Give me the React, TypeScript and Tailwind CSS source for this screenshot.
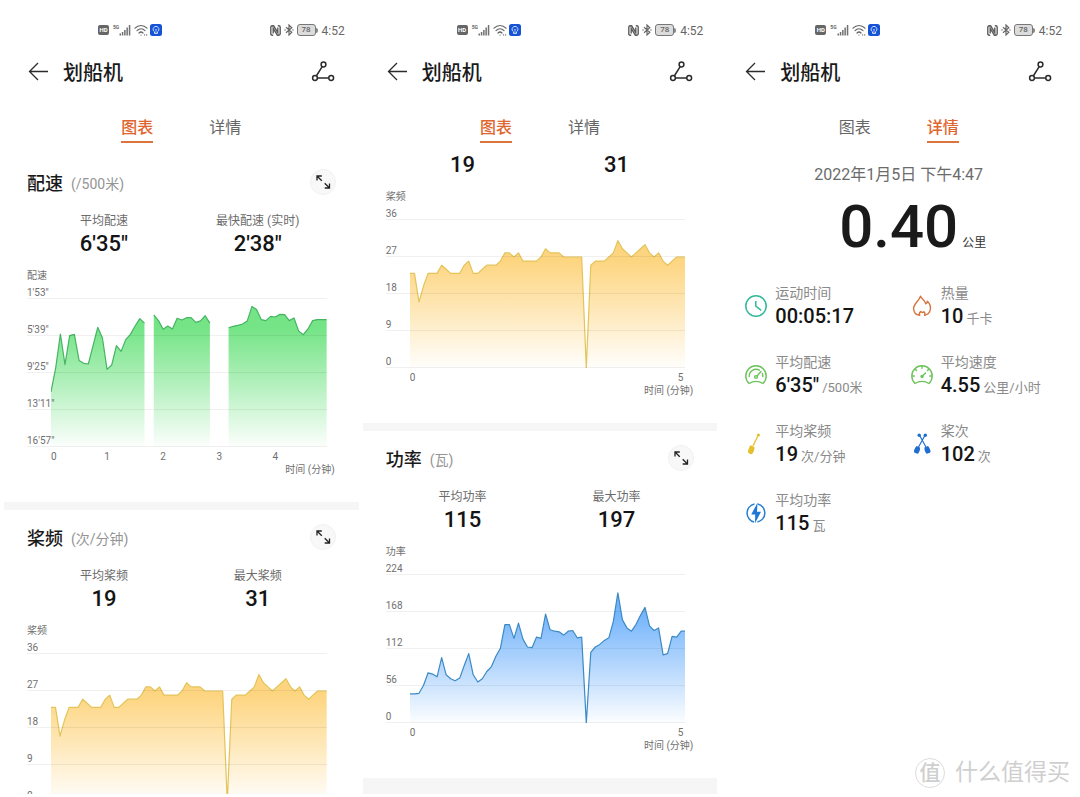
import { useId, type ReactNode } from 'react';

type Point = number | null;

type Series = {
  name: string;
  points: Point[];
  top: number;
  bottom: number;
  labels: string[];
  ticks: string[];
  stroke: string;
  fill: string;
};

// Seconds per 500 m, one sample every 5 seconds. null = rest, no pace recorded.
const paceSeries: Series = {
  name: '配速',
  points: [
    681, 534, 327, 514, 337, 329, 488, 506, 510, 398, 286, 351, 543, 516, 398, 433, 361, 329, 278, 233, 260,
    null,
    211, 245, 298, 278, 296, 231, 241, 227, 227, 256, 247, 215, 260,
    null, null, null,
    288, 280, 274, 266, 247, 158, 178, 239, 245, 219, 223, 207, 209, 245, 229, 308, 331, 296, 245, 239, 239, 239,
  ],
  top: 113,
  bottom: 1017,
  labels: ['1\'53"', '5\'39"', '9\'25"', '13\'11"', '16\'57"'],
  ticks: ['0', '1', '2', '3', '4'],
  stroke: '#45b463',
  fill: '#74e486',
};

const rateSeries: Series = {
  name: '桨频',
  points: [
    23, 23, 16, 20, 23, 23, 23, 25, 24, 23, 23, 23, 25, 26, 23, 23, 24, 25, 25, 25, 26, 28, 28, 27, 28, 26, 26, 26,
    26, 27, 29, 28, 28, 28, 27, 27, 27, 27, 27, 0, 25, 26, 26, 26, 27, 28, 31, 29, 28, 27, 28, 29, 30, 28, 27, 28,
    26, 25, 26, 27, 27, 27,
  ],
  top: 36,
  bottom: 0,
  labels: ['36', '27', '18', '9', '0'],
  ticks: ['0', '5'],
  stroke: '#e3c459',
  fill: '#fdd580',
};

const powerSeries: Series = {
  name: '功率',
  points: [
    44, 44, 45, 57, 76, 74, 70, 99, 73, 67, 64, 68, 87, 105, 73, 62, 67, 78, 85, 101, 113, 149, 149, 128, 151, 127,
    115, 114, 130, 128, 165, 141, 139, 138, 133, 139, 140, 129, 130, 0, 107, 115, 119, 125, 129, 154, 197, 156, 144,
    139, 149, 163, 175, 147, 140, 144, 103, 105, 131, 130, 139, 139,
  ],
  top: 224,
  bottom: 0,
  labels: ['224', '168', '112', '56', '0'],
  ticks: ['0', '5'],
  stroke: '#3c8ac4',
  fill: '#74b4fb',
};

const W = 276;
const H = 148;

function toSegments({ points, top, bottom }: Series) {
  const segments: string[][] = [[]];
  points.forEach((p, i) => {
    if (p === null) {
      if (segments[segments.length - 1].length) segments.push([]);
      return;
    }
    const x = (i / (points.length - 1)) * W;
    const y = ((p - top) / (bottom - top)) * H;
    segments[segments.length - 1].push(`${x.toFixed(1)},${y.toFixed(1)}`);
  });
  return segments;
}

function AreaChart({ series }: { series: Series }) {
  const id = useId();
  const segments = toSegments(series);
  const area = segments
    .map((s) => `M${s[0].split(',')[0]},${H} L${s.join(' L')} L${s[s.length - 1].split(',')[0]},${H} Z`)
    .join(' ');
  const line = segments.map((s) => `M${s.join(' L')}`).join(' ');
  const everyMinute = series.ticks.length > 2;

  return (
    <div className="text-[10px] leading-3 text-[#707070]">
      <div className="mt-[9px] leading-4">{series.name}</div>
      <div className="relative mr-2">
        <div className="absolute inset-x-0 bottom-0 h-[148px] pl-6">
          <svg viewBox={`0 0 ${W} ${H}`} preserveAspectRatio="none" className="block h-full w-full">
            <defs>
              <linearGradient id={id} x1="0" y1="0" x2="0" y2="1">
                <stop offset="0.15" stopColor={series.fill} />
                <stop offset="0.55" stopColor={series.fill} stopOpacity="0.55" />
                <stop offset="1" stopColor={series.fill} stopOpacity="0.02" />
              </linearGradient>
            </defs>
            <path d={area} fill={`url(#${id})`} />
            <path d={line} fill="none" stroke={series.stroke} strokeWidth="1.2" strokeLinejoin="round" />
          </svg>
        </div>
        <div className="relative leading-[10px]">
          {series.labels.map((label, i) => (
            <div
              key={label}
              className={`flex items-end border-b border-black/6 ${i === 0 ? 'h-[15px]' : 'h-[37px]'}`}
            >
              {label}
            </div>
          ))}
        </div>
      </div>
      <div className={`mt-1 mr-2 flex pl-6 ${everyMinute ? '' : 'justify-between pr-0.5'}`}>
        {series.ticks.map((tick, i) => (
          <span
            key={tick}
            className={i === 0 ? 'text-left' : 'text-center'}
            style={everyMinute ? { width: `${(12 / 59) * (i === 0 ? 50 : 100)}%` } : undefined}
          >
            {tick}
          </span>
        ))}
      </div>
      <div className="text-right leading-[14px]">时间 (分钟)</div>
    </div>
  );
}

function ExpandIcon() {
  return (
    <svg viewBox="0 0 24 24" className="h-6 w-6" fill="none" stroke="#222" strokeWidth="1.3">
      <path d="M6 10.500V6h4.800M6.200 6.200l4.600 4.600M18.500 13.500V18h-4.800M18.300 17.800l-4.600-4.600" />
    </svg>
  );
}

type ChartSectionProps = {
  title?: string;
  unit?: string;
  stats: { label?: string; value: string }[];
  series: Series;
};

function ChartSection({ title, unit, stats, series }: ChartSectionProps) {
  return (
    <section className="pr-6 pb-[25px] pl-[23px]">
      {title && (
        <div className="mb-[19px] flex items-center justify-between pt-[15px]">
          <h2 className="flex h-6 items-center gap-2 pt-1 text-lg leading-6 font-medium text-[#1a1a1a]">
            {title}
            <span className="text-sm font-normal text-[#949494]">({unit})</span>
          </h2>
          <button type="button" aria-label="全屏" className="rounded-full bg-[#f8f8f8] outline outline-[#f0f0f0]">
            <ExpandIcon />
          </button>
        </div>
      )}
      <div className="grid grid-cols-2 text-center">
        {stats.map(({ label, value }) => (
          <div key={value}>
            {label && <div className="text-xs leading-4 text-[#6b6b6b]">{label}</div>}
            <div className="text-[22px] leading-[30px] font-medium text-[#141414]">{value}</div>
          </div>
        ))}
      </div>
      <AreaChart series={series} />
    </section>
  );
}

function StatusBar() {
  return (
    <div className="flex h-5 items-center justify-between pr-[14px] pl-[94px] text-[#666]">
      <div className="flex items-center">
        <span className="flex h-[10px] w-[11px] items-center justify-center rounded-[2px] bg-[#666] text-[6px] leading-none font-bold text-white">
          HD
        </span>
        <span className="ml-1 self-start text-[5px] leading-[6px] font-bold">5G</span>
        <svg viewBox="0 0 12 12" className="h-3 w-3" fill="#707070">
          <path d="M.5 9.500h1.500V11.500H.5zM2.800 8h1.500v3.500H2.800zM5.100 6h1.500v5.500H5.100zM7.400 3.500h1.500v8H7.400zM9.800 1h1.500v10.500H9.800z" />
        </svg>
        <svg viewBox="0 0 14 12" className="ml-[3px] h-3 w-3.5" fill="none" stroke="#666" strokeWidth="1.200" strokeLinecap="round">
          <path d="M1 4.200C4.500.6 9.500.6 13 4.200M3 6.600c2.300-2.300 5.700-2.300 8 0M5 9c1.200-1.200 2.800-1.200 4 0" />
          <path d="M7 11v.1M10.500 10.900h.1M12.600 10.900h.1" />
        </svg>
        <svg viewBox="0 0 12 12" className="ml-0.5 h-3 w-3" fill="none">
          <rect width="12" height="12" rx="2.500" fill="#1652d6" />
          <path d="M4.500 7.800a2.900 2.900 0 1 1 3 0v1.600h-3z" stroke="#cfe0ff" strokeWidth="1" />
          <path d="M4.800 5l1.200 1.100L7.200 5M6 6v3" stroke="#cfe0ff" strokeWidth=".7" />
        </svg>
      </div>
      <div className="flex items-center">
        <svg viewBox="0 0 11 11" className="h-[11px] w-[11px]" fill="none" stroke="#5c5c5c">
          <path d="M3.200 10.200h-1Q.8 10.200.8 8.800V2.200Q.8.800 2.200.8h1.400l4.200 6.700V2.500M7.800.8h1q1.400 0 1.400 1.400v6.600q0 1.400-1.400 1.400H7.400L3.200 3.500v5" strokeWidth="1.400" />
        </svg>
        <svg viewBox="0 0 10 12" className="ml-[3px] h-3 w-[10px]" fill="none" stroke="#666" strokeWidth="1.200">
          <path d="M2 3.300l5.800 5L5 11V1l2.800 2.700L2 8.700M.3 6h1.500M8.200 6h1.500" />
        </svg>
        <span className="ml-[3px] flex h-3 w-[19px] items-center justify-center rounded-[3px] border border-[#777] bg-[#dcdcdc] text-[8px] leading-none font-medium">
          78
        </span>
        <span className="h-[5px] w-0.5 rounded-r-sm bg-[#888]" />
        <time className="ml-1 pt-px text-[12px] leading-4">4:52</time>
      </div>
    </div>
  );
}

function Screen({ active, children }: { active: '图表' | '详情'; children: ReactNode }) {
  return (
    <article className="flex min-h-0 flex-col overflow-hidden bg-white">
      <header className="pt-5">
        <StatusBar />
        <div className="flex h-16 items-center px-6">
          <button type="button" aria-label="返回">
            <svg viewBox="0 0 20 20" className="h-5 w-5" fill="none" stroke="#2b2b2b" strokeWidth="1.300">
              <path d="M20 9.500H1.500M10 1L1.500 9.500 10 18" />
            </svg>
          </button>
          <h1 className="ml-[15px] flex-1 pt-0.5 text-xl leading-7 font-medium text-[#1a1a1a]">划船机</h1>
          <button type="button" aria-label="轨迹">
            <svg viewBox="0 0 24 22" className="h-[22px] w-6" fill="none" stroke="#2b2b2b" strokeWidth="1.500">
              <circle cx="12.500" cy="3.500" r="2.400" />
              <circle cx="4" cy="17" r="2.400" />
              <circle cx="20.200" cy="17" r="2.400" />
              <path d="M11.200 5.600L5.300 15M6.400 17h11.400" />
            </svg>
          </button>
        </div>
        <div role="tablist" className="flex justify-center gap-14 pt-3 text-base leading-6">
          {['图表', '详情'].map((tab) => (
            <button
              key={tab}
              type="button"
              role="tab"
              aria-selected={tab === active}
              className={
                tab === active
                  ? 'border-b-2 border-[#dc7440] pb-px font-medium text-[#e0662f]'
                  : 'border-b-2 border-transparent pb-px text-[#666]'
              }
            >
              {tab}
            </button>
          ))}
        </div>
      </header>
      {children}
    </article>
  );
}

/* Detail icons */

function ClockIcon() {
  return (
    <svg viewBox="0 0 22 22" className="h-[22px] w-[22px]" fill="none" stroke="#35b999" strokeWidth="1.500">
      <circle cx="11" cy="11" r="10.200" />
      <path d="M10.800 6v5.200l5.400 4.200" />
    </svg>
  );
}

function FlameIcon() {
  return (
    <svg viewBox="0 0 22 22" className="h-[22px] w-[22px]" fill="none" stroke="#d6743f" strokeWidth="1.400" strokeLinejoin="round">
      <path d="M9.500 1.200c1.200 3 4.800 4.200 5.300 7.600 .9-.5 1.500-1.300 1.500-2.600 2.400 2.200 3.400 4.800 3.100 7.800-.4 3.300-2.600 5.600-5.900 6.200 .7-1.300 .5-2.600-.6-3.500-.9 .8-2.300 .8-3.200-.1-1.300 1-1.700 2.300-1 3.700-3.600-.4-6.100-3-6.100-6.700C2.600 9 7.600 6.500 9.500 1.200z" />
    </svg>
  );
}

function PaceIcon() {
  return (
    <svg viewBox="0 0 22 22" className="h-[22px] w-[22px]" fill="none" stroke="#6cc35c" strokeWidth="1.400" strokeLinecap="round">
      <path d="M4 19.500C2 17.600.8 14.900.8 12a10.200 10.200 0 0 1 20.400 0c0 2.900-1.200 5.600-3.200 7.500-4.400-2.700-9.600-2.700-14 0z" strokeLinejoin="round" />
      <path d="M4.200 12.500a6.900 6.900 0 0 1 10.200-6.300M17.300 9.400c.4 1 .6 2 .5 3.100" />
      <circle cx="11" cy="13" r="1.400" />
      <path d="M12 12l4-4.500" />
    </svg>
  );
}

function SpeedIcon() {
  return (
    <svg viewBox="0 0 22 22" className="h-[22px] w-[22px]" fill="none" stroke="#6cc35c" strokeWidth="1.400" strokeLinecap="round">
      <path d="M4 19.500C2 17.600.8 14.900.8 12a10.200 10.200 0 0 1 20.400 0c0 2.900-1.200 5.600-3.200 7.500-4.400-2.700-9.600-2.700-14 0z" strokeLinejoin="round" />
      <path d="M11 2.500v1.800M4.500 5.500l1 1M17.500 5.500l-1 1M1.500 12h1.800M20.500 12h-1.800" />
      <circle cx="11" cy="12.500" r="1" fill="#6cc35c" />
      <path d="M11 12.500l3.500-3.500" />
    </svg>
  );
}

function OarIcon() {
  return (
    <svg viewBox="0 0 22 22" className="h-[22px] w-[22px]" fill="#e6bf2e">
      <path d="M13.200 2.200L8 13" stroke="#e6bf2e" strokeWidth="1.300" />
      <circle cx="13.400" cy="2" r="1.600" />
      <path d="M5.500 12.200l3.900 1.800c.3 2.300-.5 4.400-1.900 6.500-.5 .7-1.300 .8-2.100 .4l-1.500-.7c-.8-.4-1.100-1.100-.9-1.900.6-2.500 1.200-4.500 2.500-6.100z" />
    </svg>
  );
}

function OarsIcon() {
  return (
    <svg viewBox="0 0 22 22" className="h-[22px] w-[22px]" fill="#1f6fd0">
      <path d="M14 2.200L7 15M8.500 2.200l7 12.800" stroke="#1f6fd0" strokeWidth="1.200" />
      <circle cx="14.300" cy="2.200" r="1.700" />
      <circle cx="8.200" cy="2.200" r="1.700" />
      <path d="M5.600 13l3.400 1.600c.2 2-.3 3.800-1.600 5.600-.4 .6-1 .7-1.700 .4l-2-.9c-.7-.3-.9-.9-.7-1.600.5-2.100 1.200-3.900 2.600-5.100zM16.900 13l-3.400 1.600c-.2 2 .3 3.800 1.600 5.600 .4 .6 1 .7 1.700 .4l2-.9c.7-.3 .9-.9 .7-1.600-.5-2.100-1.200-3.900-2.600-5.100z" />
    </svg>
  );
}

function PowerIcon() {
  return (
    <svg viewBox="0 0 22 22" className="h-[22px] w-[22px]" fill="none">
      <path d="M9.500 2A9.200 9.200 0 0 0 9.200 20M12.700 2A9.200 9.200 0 0 1 12.400 20" stroke="#2a80d2" strokeWidth="1.500" />
      <path d="M12.500.8L6.200 12.600h4l-.2 8.600 6-11.400h-4z" fill="#1f78d6" />
    </svg>
  );
}

const details = [
  { icon: <ClockIcon />, label: '运动时间', value: '00:05:17', unit: '' },
  { icon: <FlameIcon />, label: '热量', value: '10', unit: '千卡' },
  { icon: <PaceIcon />, label: '平均配速', value: '6\'35"', unit: '/500米' },
  { icon: <SpeedIcon />, label: '平均速度', value: '4.55', unit: '公里/小时' },
  { icon: <OarIcon />, label: '平均桨频', value: '19', unit: '次/分钟' },
  { icon: <OarsIcon />, label: '桨次', value: '102', unit: '次' },
  { icon: <PowerIcon />, label: '平均功率', value: '115', unit: '瓦' },
];

export default function App() {
  return (
    <main className="relative grid h-screen grid-cols-3 grid-rows-[minmax(0,1fr)] gap-1 overflow-hidden bg-white px-1 pb-[3px] font-['Roboto','Noto_Sans_CJK_SC',sans-serif]">
      {/* Charts, top of the page */}
      <Screen active="图表">
        <div className="pt-3">
          <ChartSection
            title="配速"
            unit="/500米"
            stats={[
              { label: '平均配速', value: '6\'35"' },
              { label: '最快配速 (实时)', value: '2\'38"' },
            ]}
            series={paceSeries}
          />
          <div className="h-2 bg-[#f6f6f6]" />
          <ChartSection
            title="桨频"
            unit="次/分钟"
            stats={[
              { label: '平均桨频', value: '19' },
              { label: '最大桨频', value: '31' },
            ]}
            series={rateSeries}
          />
        </div>
      </Screen>

      {/* Charts, scrolled down */}
      <Screen active="图表">
        <div className="flex flex-1 flex-col pt-[7px]">
          <ChartSection stats={[{ value: '19' }, { value: '31' }]} series={rateSeries} />
          <div className="h-2 bg-[#f6f6f6]" />
          <ChartSection
            title="功率"
            unit="瓦"
            stats={[
              { label: '平均功率', value: '115' },
              { label: '最大功率', value: '197' },
            ]}
            series={powerSeries}
          />
          <div className="flex-1 bg-[#f6f6f6]" />
        </div>
      </Screen>

      {/* Details */}
      <Screen active="详情">
        <div className="pt-5">
          <p className="text-center text-base leading-6 text-[#6b6b6b]">2022年1月5日 下午4:47</p>
          <div className="mt-2 grid h-16 grid-cols-[1fr_auto_1fr] items-baseline gap-1">
            <span />
            <strong className="text-[60px] leading-[64px] font-medium text-[#1a1a1a]">0.40</strong>
            <span className="text-xs leading-4 text-[#333]">公里</span>
          </div>
          <dl className="mt-6 grid grid-cols-2 gap-y-[23px] pl-6">
            {details.map(({ icon, label, value, unit }) => (
              <div key={label} className="flex items-center gap-2">
                {icon}
                <div>
                  <dt className="text-sm leading-5 text-[#8a8a8a]">{label}</dt>
                  <dd className="flex h-[26px] items-baseline gap-[3px] text-xl leading-[26px] font-medium text-[#141414]">
                    {value}
                    {unit && <span className="text-[13px] leading-4 font-normal text-[#8a8a8a]">{unit}</span>}
                  </dd>
                </div>
              </div>
            ))}
          </dl>
        </div>
      </Screen>

      {/* Watermark */}
      <div className="absolute right-2.5 bottom-1.5 flex items-center gap-2.5 text-[#cfcfcf]">
        <span className="flex h-[30px] w-[30px] items-center justify-center rounded-full border border-[#dcdcdc] text-[21px] leading-none font-medium">
          值
        </span>
        <span className="text-[23px] leading-9">什么值得买</span>
      </div>
    </main>
  );
}
